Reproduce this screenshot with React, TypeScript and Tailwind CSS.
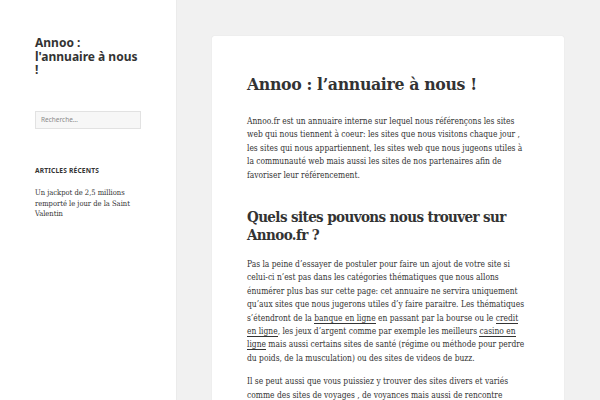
const serif = "font-['DejaVu_Serif','Liberation_Serif',serif] [font-stretch:condensed]";
const sans = "font-['Noto_Sans','Open_Sans',sans-serif]";
const link = 'border-b border-[#333]';

export default function App() {
  return (
    <div className="flex w-[600px] h-[400px] overflow-hidden bg-[#f1f1f1] text-[#333]">
      {/* Sidebar */}
      <aside className="w-[176px] shrink-0 bg-white shadow-[0_0_1px_rgba(0,0,0,0.15)] pl-[35px] pr-[35px] pt-[36px]">
        <h1 className={`text-[12px] leading-[13.6px] font-bold ${sans}`}>
          Annoo : l'annuaire à nous !
        </h1>
        <div className="mt-[34px] h-[18px] w-[106px] border border-[rgba(51,51,51,0.1)] bg-[#f7f7f7] flex items-center pl-[5px]">
          <span className={`text-[6.5px] text-[#8a8a8a] ${sans}`}>Recherche…</span>
        </div>
        <h2
          className={`mt-[37px] text-[6.6px] font-bold uppercase tracking-[0.03em] leading-[10px] ${sans}`}
        >
          Articles récents
        </h2>
        <p className={`mt-[12px] text-[7.5px] leading-[10.8px] ${serif}`}>
          Un jackpot de 2,5 millions remporté le jour de la Saint Valentin
        </p>
      </aside>

      {/* Main */}
      <main className="pl-[36px] pt-[36px]">
        <article
          className={`w-[352px] min-h-[400px] bg-white rounded-[2px] shadow-[0_0_1px_rgba(0,0,0,0.15)] px-[35px] pt-[36px] ${serif}`}
        >
          <h1 className="text-[17.5px] leading-[24px] font-bold tracking-[-0.02em]">
            Annoo : l’annuaire à nous !
          </h1>
          <div className="text-[8.4px] leading-[13.4px] mt-[19px]">
            <p>
              Annoo.fr est un annuaire interne sur lequel nous référençons les sites web qui nous
              tiennent à coeur: les sites que nous visitons chaque jour , les sites qui nous
              appartiennent, les sites web que nous jugeons utiles à la communauté web mais aussi
              les sites de nos partenaires afin de favoriser leur référencement.
            </p>
            <h2 className="text-[15px] leading-[18px] font-bold tracking-[-0.04em] mt-[26px]">
              Quels sites pouvons nous trouver sur Annoo.fr ?
            </h2>
            <p className="mt-[14px]">
              Pas la peine d’essayer de postuler pour faire un ajout de votre site si celui-ci n’est
              pas dans les catégories thématiques que nous allons énumérer plus bas sur cette page:
              cet annuaire ne servira uniquement qu’aux sites que nous jugerons utiles d’y faire
              paraitre. Les thématiques s’étendront de la <span className={link}>banque en ligne</span>{' '}
              en passant par la bourse ou le <span className={link}>credit en ligne</span>, les jeux
              d’argent comme par exemple les meilleurs <span className={link}>casino en ligne</span>{' '}
              mais aussi certains sites de santé (régime ou méthode pour perdre du poids, de la
              musculation) ou des sites de videos de buzz.
            </p>
            <p className="mt-[10px]">
              Il se peut aussi que vous puissiez y trouver des sites divers et variés comme des sites
              de voyages , de voyances mais aussi de rencontre
            </p>
          </div>
        </article>
      </main>
    </div>
  );
}
